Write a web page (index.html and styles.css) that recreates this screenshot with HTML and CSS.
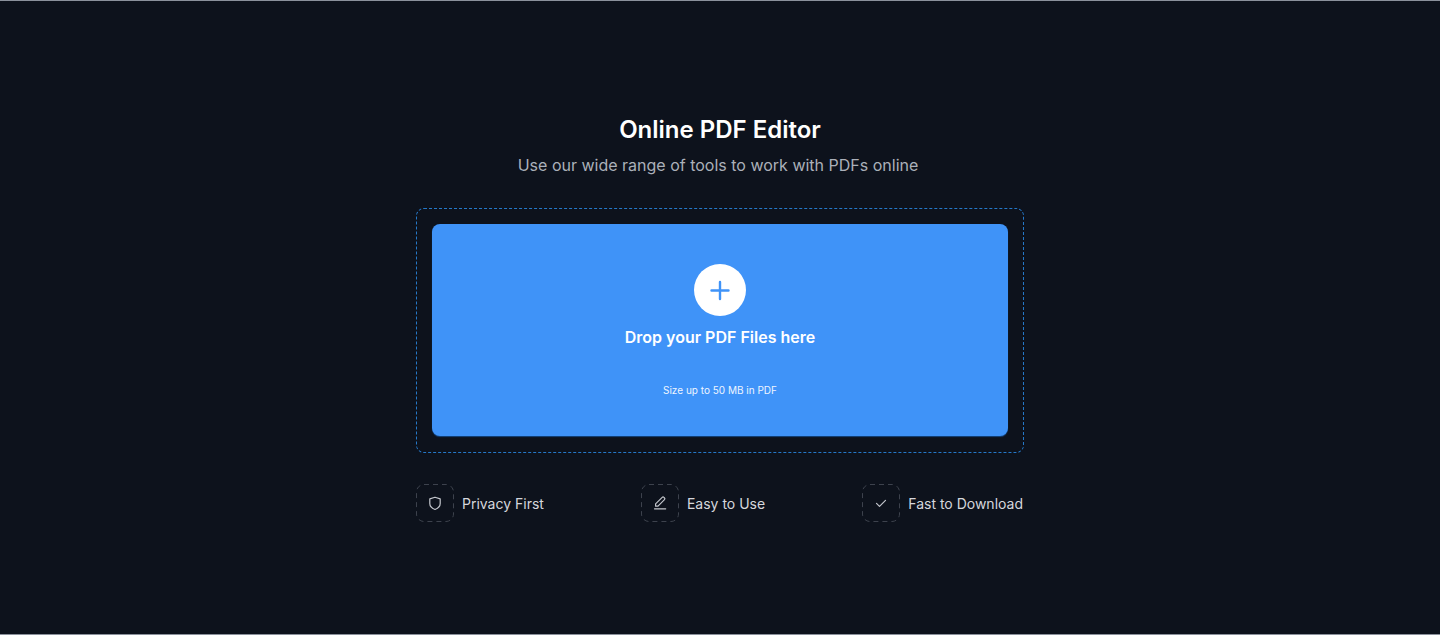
FILE: index.html
```html
<!DOCTYPE html>
<html lang="en">
<head>
<meta charset="utf-8">
<title>Online PDF Editor</title>
<link rel="stylesheet" href="styles.css">
</head>
<body>
<main class="page">
  <section class="editor">
    <h1 class="title">Online PDF Editor</h1>
    <p class="subtitle">Use our wide range of tools to work with PDFs online</p>
    <div class="dropzone">
      <div class="panel">
        <div class="plus">
          <svg width="24" height="24" viewBox="0 0 24 24" fill="none" stroke="#3f93f8" stroke-width="2.4" stroke-linecap="round"><path d="M12 4v17M3.500 12.500h17"/></svg>
        </div>
        <div class="drop-label">Drop your PDF Files here</div>
        <div class="drop-note">Size up to 50 MB in PDF</div>
      </div>
    </div>
    <ul class="features">
      <li class="feature">
        <svg class="feature-icon" width="38" height="38" viewBox="0 0 38 38" fill="none">
          <rect class="dash" x=".5" y=".5" width="37" height="37" rx="7.5"/>
          <path class="glyph" d="M19 13.200l5.200 1.700v4.600c0 3.100-2.200 4.800-5.200 6-3-1.200-5.200-2.900-5.200-6v-4.600z"/>
        </svg>
        <span class="feature-text">Privacy First</span>
      </li>
      <li class="feature">
        <svg class="feature-icon" width="38" height="38" viewBox="0 0 38 38" fill="none">
          <rect class="dash" x=".5" y=".5" width="37" height="37" rx="7.5"/>
          <path class="glyph" d="M13.500 24.800h11.200M14.600 22.200v-2.300l6.600-6.500c.5-.5 1.200-.5 1.700 0l.6.6c.5.5.5 1.200 0 1.700l-6.500 6.500z"/>
        </svg>
        <span class="feature-text">Easy to Use</span>
      </li>
      <li class="feature">
        <svg class="feature-icon" width="38" height="38" viewBox="0 0 38 38" fill="none">
          <rect class="dash" x=".5" y=".5" width="37" height="37" rx="7.5"/>
          <path class="glyph" d="M14.500 19.300l3 3 6-6"/>
        </svg>
        <span class="feature-text">Fast to Download</span>
      </li>
    </ul>
  </section>
</main>
</body>
</html>
```
FILE: styles.css
```css
* { box-sizing: border-box; }
html, body { margin: 0; height: 100%; }
body {
  background: #0d121c;
  font-family: Inter, "Liberation Sans", sans-serif;
  color: #fff;
}
.page {
  height: 635px;
  border-top: 1px solid #8b919c;
  border-bottom: 1px solid #8b919c;
  display: flex;
  justify-content: center;
  padding-top: 115px;
}
.editor { width: 608px; display: flex; flex-direction: column; }
.title {
  margin: 0;
  font-size: 24px;
  line-height: 28px;
  font-weight: 600;
  text-align: center;
}
.subtitle {
  margin: 9px 0 0;
  padding-right: 4px;
  font-size: 16px;
  line-height: 24px;
  text-align: center;
  color: #abb0b9;
}
.dropzone {
  margin-top: 31px;
  height: 245px;
  padding: 15px;
  border: 1px dashed #2578c8;
  border-radius: 8px;
}
.panel {
  height: 212px;
  background: #3f93f8;
  border-radius: 8px;
  display: flex;
  flex-direction: column;
  align-items: center;
  padding-top: 40px;
  box-shadow: 0 1px 1px rgba(20, 80, 150, .8);
}
.plus {
  width: 52px;
  height: 52px;
  border-radius: 50%;
  background: #fff;
  display: flex;
  align-items: center;
  justify-content: center;
}
.drop-label { margin-top: 10px; font-size: 16px; line-height: 22px; font-weight: 600; }
.drop-note { margin-top: 34px; font-size: 10px; line-height: 16px; color: #eef5ff; }
.features {
  list-style: none;
  margin: 31px 0 0;
  padding: 0 1px 0 0;
  display: flex;
  justify-content: space-between;
}
.feature { display: flex; align-items: center; gap: 8px; }
.feature-icon { display: block; }
.feature-text { padding-top: 2px; font-size: 14px; line-height: 20px; color: #d5d7dc; }
.dash { stroke: #3d424d; stroke-dasharray: 5 4; }
.glyph { stroke: #c3c6cc; stroke-width: 1.2; stroke-linecap: round; stroke-linejoin: round; }
```
